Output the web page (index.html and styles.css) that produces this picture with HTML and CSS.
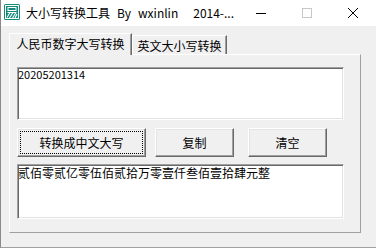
FILE: index.html
```html
<!DOCTYPE html>
<html lang="zh-CN">
<head>
<meta charset="utf-8">
<title>大小写转换工具</title>
<link rel="stylesheet" href="styles.css">
</head>
<body>
<div class="window">
  <div class="titlebar">
    <svg class="app-icon" width="16" height="16" viewBox="0 0 16 16">
      <rect x="0" y="0" width="16" height="16" rx="1.5" fill="#148a7c"/>
      <rect x="1.5" y="1.5" width="13" height="13" fill="none" stroke="#fff" stroke-width="1"/>
      <rect x="4" y="3.5" width="8" height="3" fill="none" stroke="#fff" stroke-width="1"/>
      <path d="M3.5 8.5h9 M6 8.5l-3 5 M9 8.5l-3.5 5.5 M12 8.5l-3.5 5.5 M13 10l-2 4" stroke="#fff" stroke-width="1.1" fill="none"/>
    </svg>
    <div class="title">
      <span>大小写转换工具</span><span class="t-by">By</span><span class="t-author">wxinlin</span><span class="t-date">2014-...</span>
    </div>
    <div class="caption-buttons">
      <div class="cbtn">
        <svg width="10" height="10" viewBox="0 0 10 10"><path d="M0 5.5h10" stroke="#000" stroke-width="1"/></svg>
      </div>
      <div class="cbtn">
        <svg width="10" height="10" viewBox="0 0 10 10"><rect x="0.5" y="0.5" width="9" height="9" fill="none" stroke="#c8c8c8" stroke-width="1"/></svg>
      </div>
      <div class="cbtn">
        <svg width="10" height="10" viewBox="0 0 10 10"><path d="M0 0L10 10M10 0L0 10" stroke="#000" stroke-width="1"/></svg>
      </div>
    </div>
  </div>
  <div class="client">
    <div class="tabs">
      <div class="tab tab-active">人民币数字大写转换</div>
      <div class="tab tab-inactive">英文大小写转换</div>
    </div>
    <div class="panel">
      <div class="textbox input">20205201314</div>
      <div class="btn-row">
        <button class="btn btn-main">转换成中文大写</button>
        <button class="btn btn-copy">复制</button>
        <button class="btn btn-clear">清空</button>
      </div>
      <div class="textbox output">贰佰零贰亿零伍佰贰拾万零壹仟叁佰壹拾肆元整</div>
    </div>
  </div>
</div>
</body>
</html>
```

FILE: styles.css
```css
* { box-sizing: border-box; }
html, body { margin: 0; padding: 0; }
body {
  width: 376px;
  height: 248px;
  overflow: hidden;
  background: #f0f0f0;
  font-family: "Noto Sans CJK SC", "Noto Sans", sans-serif;
  font-size: 12px;
  color: #000;
}
.window {
  height: 248px;
  border-left: 1px solid #8a8a8a;
  border-bottom: 1px solid #a0a0a0;
}
.titlebar {
  height: 26px;
  background: #fff;
  display: flex;
  align-items: center;
}
.app-icon {
  flex: none;
  margin-left: 3px;
  margin-top: -2px;
}
.title {
  display: flex;
  margin-left: 6px;
  line-height: 16px;
  white-space: nowrap;
}
.t-by { margin-left: 7px; }
.t-author { margin-left: 7px; }
.t-date { margin-left: 15px; }
.caption-buttons {
  margin-left: auto;
  display: flex;
}
.cbtn {
  width: 46px;
  height: 26px;
  display: flex;
  align-items: center;
  justify-content: center;
}
.client {
  padding: 7px 0 0 8px;
}
.tabs {
  display: flex;
  align-items: flex-end;
  height: 21px;
}
.tab {
  background: #f0f0f0;
  border: 1px solid;
  border-color: #fff #696969 transparent #fff;
  border-bottom: none;
  box-shadow: inset -1px 0 #a0a0a0;
  text-align: center;
  white-space: nowrap;
}
.tab-active {
  width: 123px;
  height: 22px;
  line-height: 20px;
  margin-bottom: -1px;
  position: relative;
  z-index: 1;
}
.tab-inactive {
  width: 95px;
  height: 19px;
  line-height: 17px;
  padding-top: 1px;
}
.panel {
  width: 352px;
  height: 179px;
  border: 1px solid;
  border-color: #fff #a0a0a0 #a0a0a0 #fff;
  padding: 12px 0 0 7px;
}
.textbox {
  width: 327px;
  background: #fff;
  border: 1px solid;
  border-color: #a0a0a0 #fff #fff #a0a0a0;
  box-shadow: inset 1px 1px #696969, inset -1px -1px #e3e3e3;
  white-space: nowrap;
  overflow: hidden;
}
.input {
  height: 53px;
  font-size: 11px;
  line-height: 12px;
}
.output {
  height: 55px;
  margin-top: 7px;
  font-size: 12px;
  line-height: 15px;
}
.btn-row {
  display: flex;
  margin-top: 8px;
  height: 29px;
}
.btn {
  height: 29px;
  padding: 0;
  font: inherit;
  color: #000;
  background: #f0f0f0;
  border: 1px solid;
  border-color: #fff #696969 #696969 #fff;
  box-shadow: inset -1px -1px #a0a0a0, inset 1px 1px #e3e3e3;
}
.btn-main {
  width: 129px;
  outline: 1px dotted #000;
  outline-offset: -4px;
}
.btn-copy {
  width: 79px;
  margin-left: 9px;
}
.btn-clear {
  width: 79px;
  margin-left: 14px;
}
```
